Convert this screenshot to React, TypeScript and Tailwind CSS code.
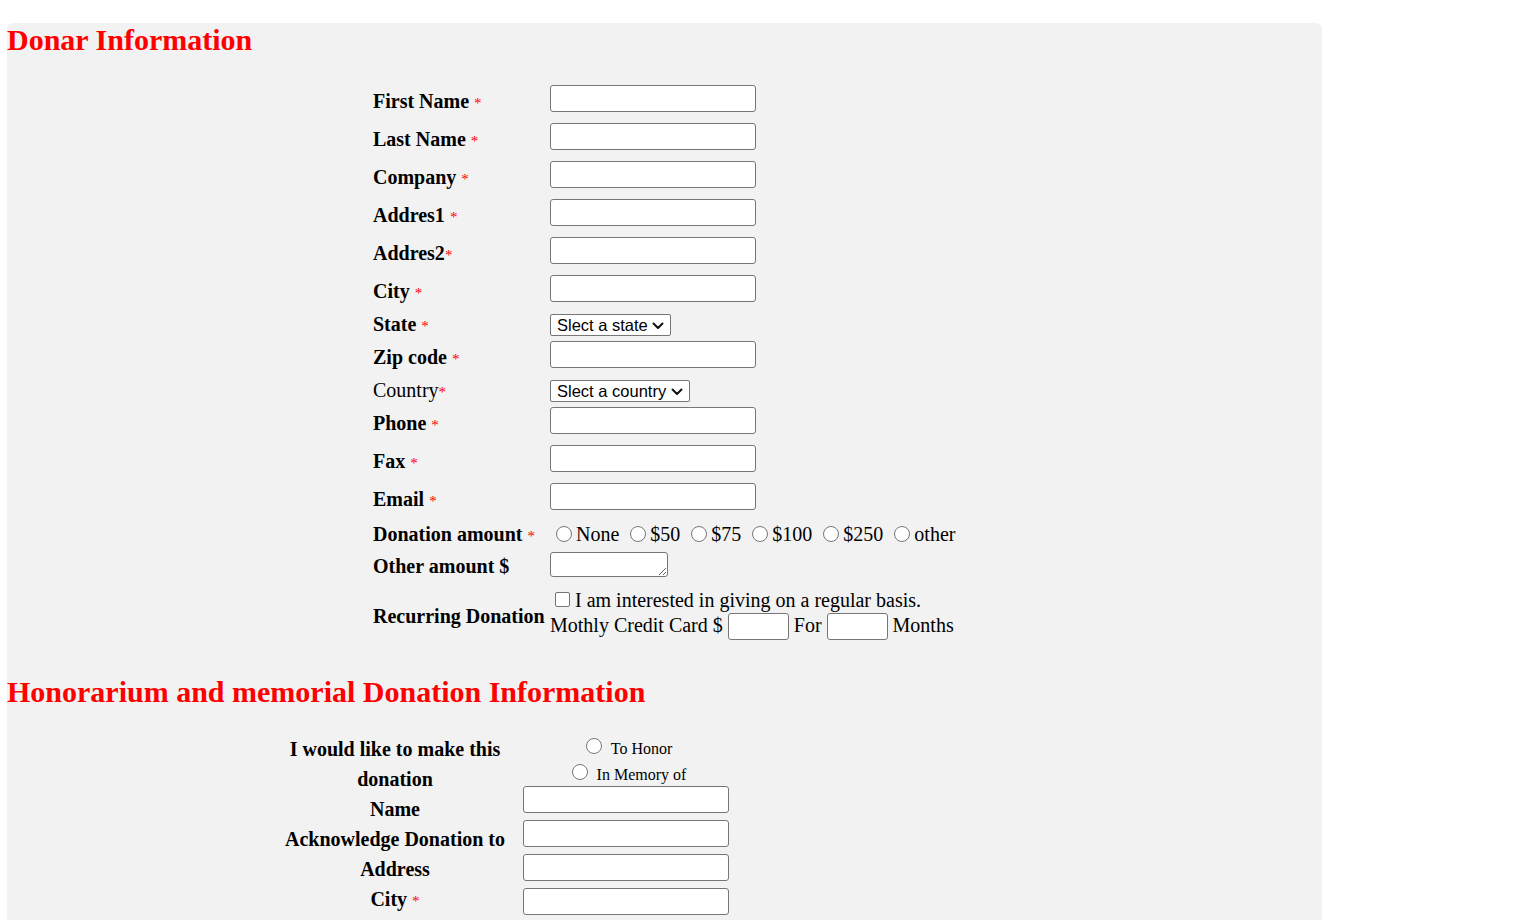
import React from "react";

const Star = ({ space = true }: { space?: boolean }) => (
  <>
    {space ? " " : ""}
    <span className="text-[#ff0000] text-[15px] font-normal">*</span>
  </>
);

const TextInput = ({ w = "w-[206px]" }: { w?: string }) => (
  <input
    type="text"
    className={`${w} h-[27px] block bg-white border border-[#767676] rounded-[3px] outline-none`}
  />
);

const FakeSelect = ({ text, width }: { text: string; width: string }) => (
  <div
    className={`relative ${width} h-[22px] bg-white border border-[#767676] rounded-[2px] font-['Liberation_Sans',Arial,sans-serif] text-[16.5px] leading-[20px] pl-[6px] text-black`}
  >
    {text}
    <svg
      className="absolute right-[6px] top-[7px]"
      width="12"
      height="8"
      viewBox="0 0 12 8"
      fill="none"
    >
      <path d="M1.5 1.5 L6 6 L10.5 1.5" stroke="#111" strokeWidth="2" strokeLinecap="round" strokeLinejoin="round" />
    </svg>
  </div>
);

const Radio = ({ cls = "" }: { cls?: string }) => (
  <input
    type="radio"
    className={`appearance-none shrink-0 w-[16px] h-[16px] rounded-full border border-[#767676] bg-white ${cls}`}
  />
);

type Row = {
  label: string;
  kind: "input" | "select";
  bold?: boolean;
  space?: boolean;
  selectText?: string;
  selectWidth?: string;
};

const rows: Row[] = [
  { label: "First Name", kind: "input" },
  { label: "Last Name", kind: "input" },
  { label: "Company", kind: "input" },
  { label: "Addres1", kind: "input" },
  { label: "Addres2", kind: "input", space: false },
  { label: "City", kind: "input" },
  { label: "State", kind: "select", selectText: "Slect a state", selectWidth: "w-[121px]" },
  { label: "Zip code", kind: "input" },
  { label: "Country", kind: "select", bold: false, space: false, selectText: "Slect a country", selectWidth: "w-[140px]" },
  { label: "Phone", kind: "input" },
  { label: "Fax", kind: "input" },
  { label: "Email", kind: "input" },
];

const amounts = ["None", "$50", "$75", "$100", "$250", "other"];

export default function App() {
  return (
    <div className="min-h-[920px] bg-white font-['Liberation_Serif','Times_New_Roman',serif] text-black">
      <div className="ml-[7px] mt-[23px] w-[1315px] bg-[#f2f2f2] rounded-t-[6px] pb-[80px]">
        <h2 className="text-[30px] leading-[34px] font-bold text-[#ff0000]">Donar Information</h2>

        <div className="w-[583px] mx-auto mt-[28px] text-[20px] leading-[22px]">
          {rows.map((r) =>
            r.kind === "input" ? (
              <div key={r.label} className="flex h-[38px]">
                <div className={`w-[177px] pt-[5px] ${r.bold === false ? "font-normal" : "font-bold"}`}>
                  {r.label}
                  <Star space={r.space !== false} />
                </div>
                <TextInput />
              </div>
            ) : (
              <div key={r.label} className="flex h-[28px]">
                <div className={`w-[177px] ${r.bold === false ? "font-normal" : "font-bold"}`}>
                  {r.label}
                  <Star space={r.space !== false} />
                </div>
                <div className="pt-[1px]">
                  <FakeSelect text={r.selectText!} width={r.selectWidth!} />
                </div>
              </div>
            )
          )}

          {/* Donation amount */}
          <div className="flex h-[31px]">
            <div className="w-[177px] pt-[2px] font-bold">
              Donation amount
              <Star />
            </div>
            <div className="flex items-start">
              {amounts.map((a, i) => (
                <div key={a} className={`flex items-start ${i > 0 ? "ml-[5px]" : ""}`}>
                  <Radio cls="mt-[5px] ml-[6px] mr-[4px]" />
                  <span className="mt-[2px]">{a}</span>
                </div>
              ))}
            </div>
          </div>

          {/* Other amount */}
          <div className="flex h-[37px]">
            <div className="w-[177px] pt-[3px] font-bold">Other amount $</div>
            <textarea className="w-[118px] h-[25px] block bg-white border border-[#767676] rounded-[3px] resize outline-none" />
          </div>

          {/* Recurring */}
          <div className="flex h-[52px]">
            <div className="w-[177px] pt-[16px] font-bold whitespace-nowrap">Recurring Donation</div>
            <div className="flex flex-col whitespace-nowrap">
              <div className="flex items-start h-[24px]">
                <input
                  type="checkbox"
                  className="appearance-none shrink-0 w-[15px] h-[15px] mt-[3px] ml-[5px] mr-[5px] bg-white border border-[#767676] rounded-[2px]"
                />
                <span>I am interested in giving on a regular basis.</span>
              </div>
              <div className="flex items-start h-[26px] gap-[5px]">
                <span className="mt-[1px]">Mothly Credit Card $</span>
                <TextInput w="w-[61px]" />
                <span className="mt-[1px]">For</span>
                <TextInput w="w-[61px]" />
                <span className="mt-[1px]">Months</span>
              </div>
            </div>
          </div>
        </div>

        <h2 className="mt-[34px] text-[30px] leading-[34px] font-bold text-[#ff0000]">
          Honorarium and memorial Donation Information
        </h2>

        <div className="ml-[263px] mt-[25px] flex">
          <div className="w-[250px] text-center font-bold text-[20px] leading-[30px]">
            <div>I would like to make this donation</div>
            <div>Name</div>
            <div>Acknowledge Donation to</div>
            <div>Address</div>
            <div>
              City
              <Star />
            </div>
          </div>
          <div className="ml-[3px] w-[212px]">
            <div className="flex justify-center items-start h-[26px] text-[16px] leading-[18px]">
              <Radio cls="mt-[4px] mr-[9px]" />
              <span className="mt-[6px]">To Honor</span>
            </div>
            <div className="flex justify-center items-start h-[26px] text-[16px] leading-[18px]">
              <Radio cls="mt-[4px] mr-[9px]" />
              <span className="mt-[6px]">In Memory of</span>
            </div>
            <div className="flex flex-col gap-[7px]">
              <TextInput />
              <TextInput />
              <TextInput />
              <TextInput />
            </div>
          </div>
        </div>
      </div>
    </div>
  );
}
